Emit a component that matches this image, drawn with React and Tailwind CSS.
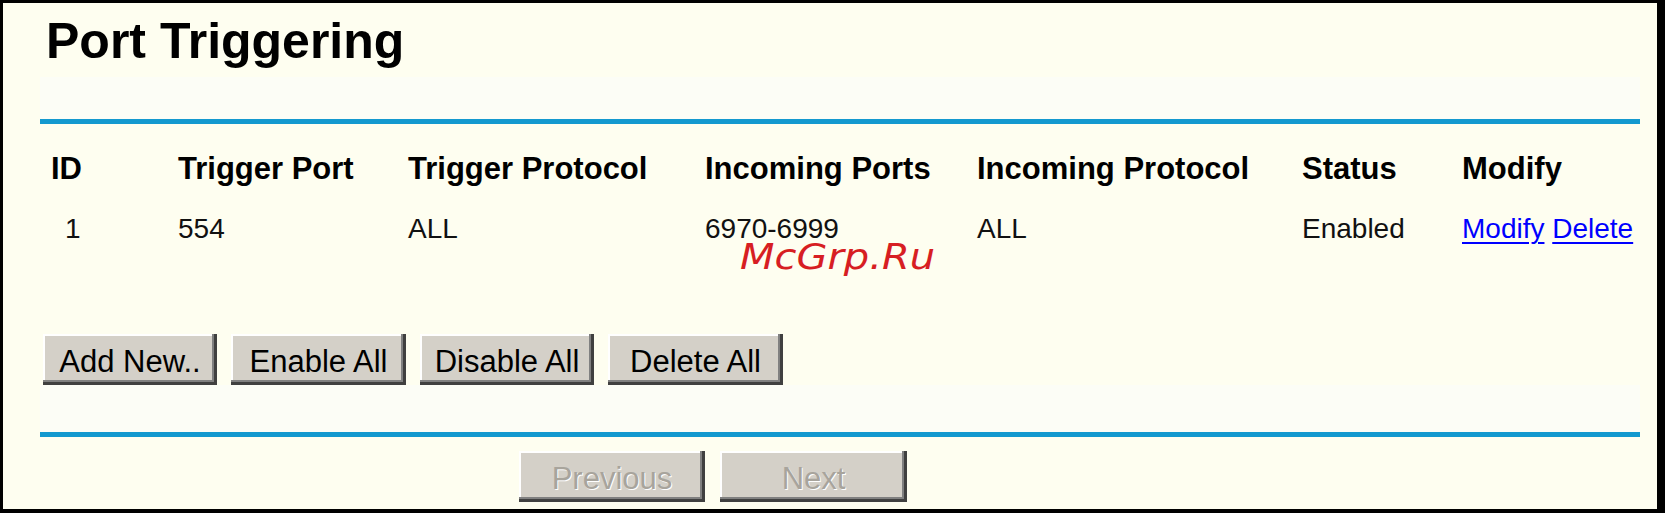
import React from 'react';
import clsx from 'clsx';

const COLS = 'grid grid-cols-[138px_230px_297px_272px_325px_160px_1fr]';

function Btn({ children, disabled, className }) {
  return (
    <button
      disabled={disabled}
      className={clsx(
        'h-[51px] flex items-center justify-center pt-[3px] bg-[#d4d0c8] text-[31px] leading-none shadow-[inset_-3px_-3px_0_#404040,inset_-5px_-5px_0_#808080,inset_2px_2px_0_#ffffff]',
        disabled ? 'text-[#a8a49c] [text-shadow:1px_1px_0_#ffffff]' : 'text-black',
        className
      )}
    >
      {children}
    </button>
  );
}

export default function App() {
  return (
    <div className="relative w-[1665px] h-[513px] bg-[#fefef0] border-black border-t-[3px] border-l-[3px] border-r-[8px] border-b-[4px] pl-[37px] pr-[17px] font-['Liberation_Sans',Arial,sans-serif] text-black">
      {/* title */}
      <div className="h-[74px] pt-[10px] pl-[6px] text-[50px] leading-[56px] font-bold">Port Triggering</div>
      <div className="h-[42px] bg-[#fcfdf6]" />
      <div className="h-[5px] bg-[#1399cf]" />

      {/* table */}
      <div className={clsx(COLS, 'h-[64px] pt-[25px] text-[31px] leading-[40px] font-bold')}>
        <div className="pl-[11px]">ID</div>
        <div>Trigger Port</div>
        <div>Trigger Protocol</div>
        <div>Incoming Ports</div>
        <div>Incoming Protocol</div>
        <div>Status</div>
        <div>Modify</div>
      </div>
      <div className={clsx(COLS, 'h-[72px] pt-[21px] text-[28px] leading-[40px] text-[#111]')}>
        <div className="pl-[25px]">1</div>
        <div>554</div>
        <div>ALL</div>
        <div>6970-6999</div>
        <div>ALL</div>
        <div>Enabled</div>
        <div className="whitespace-nowrap">
          <a href="#" className="text-[#0000ff] underline decoration-2 underline-offset-[4px]">Modify</a>{' '}
          <a href="#" className="text-[#0000ff] underline decoration-2 underline-offset-[4px]">Delete</a>
        </div>
      </div>

      {/* actions */}
      <div className="pt-[74px] pl-[3px] flex gap-[14px]">
        <Btn className="w-[174px]">Add New..</Btn>
        <Btn className="w-[175px]">Enable All</Btn>
        <Btn className="w-[174px]">Disable All</Btn>
        <Btn className="w-[175px]">Delete All</Btn>
      </div>
      <div className="h-[47px] bg-[#fcfdf6]" />
      <div className="h-[5px] bg-[#1399cf]" />

      {/* paging */}
      <div className="pt-[14px] pl-[479px] flex gap-[15px]">
        <Btn disabled className="w-[186px]">Previous</Btn>
        <Btn disabled className="w-[187px]">Next</Btn>
      </div>

      {/* watermark */}
      <div className="absolute left-[737px] top-[236px] origin-left scale-x-[1.11] font-['DejaVu_Sans',sans-serif] italic text-[36px] leading-[36px] text-[#d71e23] pointer-events-none">
        McGrp.Ru
      </div>
    </div>
  );
}
